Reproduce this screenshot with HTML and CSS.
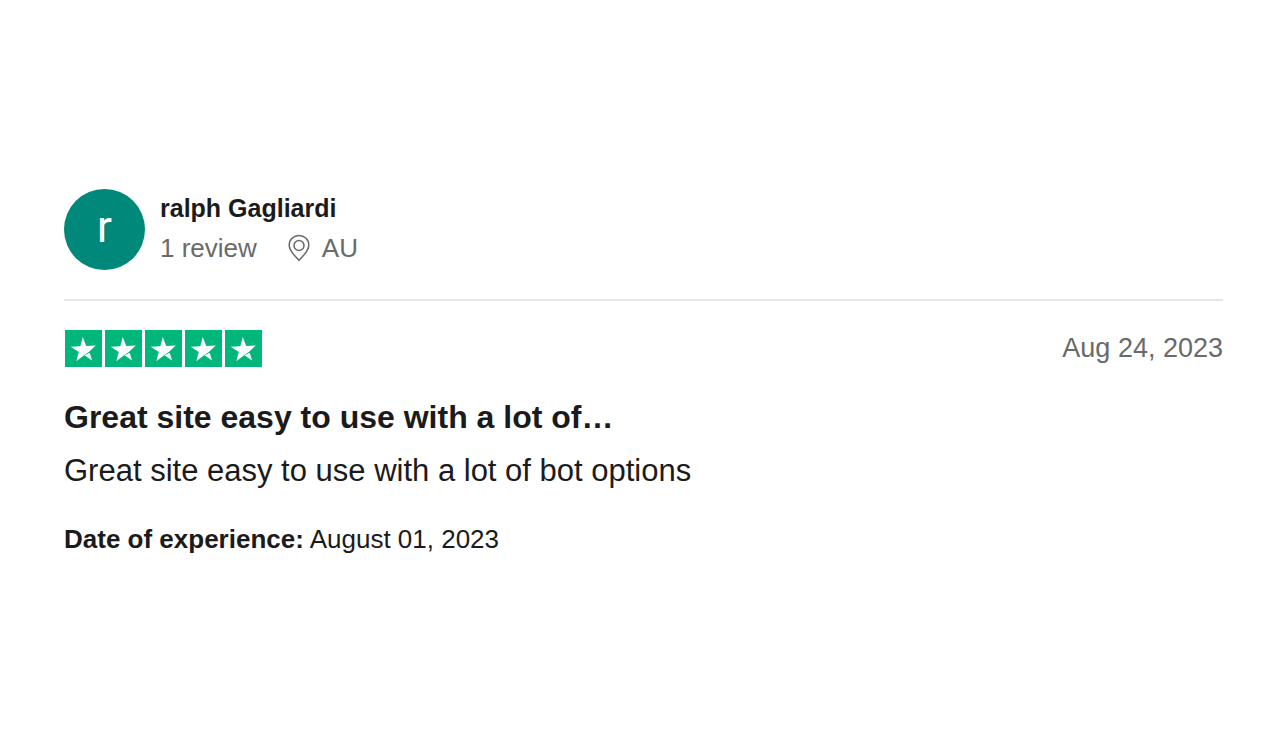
FILE: index.html
```html
<!DOCTYPE html>
<html lang="en">
<head>
  <meta charset="UTF-8">
  <meta name="viewport" content="width=device-width, initial-scale=1.0">
  <title>Review</title>
  <link rel="stylesheet" href="styles.css">
</head>
<body>
  <article class="review">
    <header class="author">
      <div class="avatar">r</div>
      <div class="author-info">
        <div class="author-name">ralph Gagliardi</div>
        <div class="author-details">
          <span>1 review</span>
          <span class="location">
            <svg class="pin" viewBox="0 0 22 28" aria-hidden="true">
              <path d="M11 1.500C5.500 1.500 1.200 5.700 1.200 11.200C1.200 17 6.500 21.500 11 26.300C15.500 21.500 20.800 17 20.800 11.200C20.800 5.700 16.500 1.500 11 1.500Z"/>
              <circle cx="11" cy="11.500" r="5"/>
            </svg>
            AU
          </span>
        </div>
      </div>
    </header>

    <div class="rating-row">
      <svg class="stars" viewBox="0 0 197 37" role="img" aria-label="Rated 5 out of 5 stars">
        <defs>
          <g id="star">
            <rect width="37" height="37" fill="#00b67a"/>
            <path fill="#fff" transform="translate(-0.900 -0.800) scale(0.840) rotate(-3 23 24)" d="M24 31l6.300-2.700 2.300 9.400zM37.960 20.180H26.520L23 9.400l-3.520 10.780H8.040l9.260 6.680-3.520 10.780 9.260-6.200 6.500-4.300z"/>
          </g>
        </defs>
        <use href="#star"/>
        <use href="#star" x="40"/>
        <use href="#star" x="80"/>
        <use href="#star" x="120"/>
        <use href="#star" x="160"/>
      </svg>
      <time class="date" datetime="2023-08-24">Aug 24, 2023</time>
    </div>

    <h2 class="title">Great site easy to use with a lot of…</h2>
    <p class="text">Great site easy to use with a lot of bot options</p>
    <p class="experience"><b>Date of experience:</b> August 01, 2023</p>
  </article>
</body>
</html>
```
FILE: styles.css
```css
* {
  box-sizing: border-box;
  margin: 0;
  padding: 0;
}

body {
  background: #fff;
  color: #1b1b1b;
  font-family: "Liberation Sans", Arial, sans-serif;
}

.review {
  padding: 189px 57px 0 64px;
}

.author {
  display: flex;
  gap: 15px;
  padding-bottom: 29px;
  border-bottom: 2px solid #e6e6e1;
}

.avatar {
  width: 81px;
  height: 81px;
  border-radius: 50%;
  background: #00897b;
  color: #fff;
  font-family: Roboto, "Liberation Sans", sans-serif;
  font-size: 44px;
  line-height: 76px;
  text-align: center;
}

.author-name {
  font-size: 25px;
  font-weight: bold;
  line-height: 39px;
}

.author-details {
  display: flex;
  gap: 31px;
  color: #696a6a;
  font-size: 26px;
  line-height: 40px;
}

.location {
  display: flex;
  align-items: center;
  gap: 12px;
}

.pin {
  width: 22px;
  height: 28px;
  fill: none;
  stroke: #696a6a;
  stroke-width: 1.5;
}

.rating-row {
  display: flex;
  justify-content: space-between;
  margin-top: 29px;
  padding-left: 1px;
}

.stars {
  width: 197px;
  height: 37px;
}

.date {
  color: #696a6a;
  font-size: 27px;
  line-height: 36px;
}

.title {
  margin-top: 30px;
  font-size: 32px;
  line-height: 40px;
}

.text {
  margin-top: 14px;
  font-size: 31px;
  line-height: 40px;
}

.experience {
  margin-top: 28px;
  font-size: 26px;
  line-height: 40px;
}
```
